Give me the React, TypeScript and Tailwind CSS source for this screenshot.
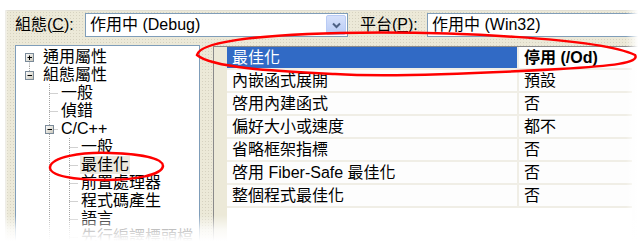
import React from "react";

const FONT = '"Liberation Sans", "Noto Sans CJK TC", sans-serif';

type Kind = "none" | "vline" | "tee" | "plusDown" | "minusUp" | "minusTee";

function Guide({ kind }: { kind: Kind }) {
  const dot = { stroke: "#a3a3a3", strokeWidth: 1, strokeDasharray: "1 1" } as const;
  const cx = 10.5;
  const cy = 9.5;
  const box = (minus: boolean) => (
    <g>
      <defs>
        <linearGradient id="bx" x1="0" y1="0" x2="1" y2="1">
          <stop offset="0" stopColor="#ffffff" />
          <stop offset="1" stopColor="#c8c5b8" />
        </linearGradient>
      </defs>
      <rect x={cx - 4} y={cy - 4} width={8} height={8} fill="url(#bx)" stroke="#7a8a99" strokeWidth={1} />
      <line x1={cx - 2} y1={cy} x2={cx + 2.5} y2={cy} stroke="#000" strokeWidth={1} />
      {!minus && <line x1={cx} y1={cy - 2} x2={cx} y2={cy + 2.5} stroke="#000" strokeWidth={1} />}
    </g>
  );
  return (
    <svg width={20} height={18} className="shrink-0 block">
      {(kind === "vline" || kind === "tee" || kind === "minusTee") && (
        <line x1={cx} y1={0} x2={cx} y2={18} {...dot} />
      )}
      {kind === "tee" && <line x1={cx} y1={cy} x2={19} y2={cy} {...dot} />}
      {kind === "plusDown" && <line x1={cx} y1={cy + 4} x2={cx} y2={18} {...dot} />}
      {kind === "minusUp" && <line x1={cx} y1={0} x2={cx} y2={cy - 4} {...dot} />}
      {kind === "minusTee" && <line x1={cx} y1={cy} x2={19} y2={cy} {...dot} />}
      {kind === "plusDown" && box(false)}
      {(kind === "minusUp" || kind === "minusTee") && box(true)}
    </svg>
  );
}

type TreeRow = { guides: Kind[]; text: string; sel?: boolean; ml: string };

const treeRows: TreeRow[] = [
  { guides: ["plusDown"], text: "通用屬性", ml: "ml-[3px]" },
  { guides: ["minusUp"], text: "組態屬性", ml: "ml-[3px]" },
  { guides: ["none", "tee"], text: "一般", ml: "ml-[1px]" },
  { guides: ["none", "tee"], text: "偵錯", ml: "ml-[1px]" },
  { guides: ["none", "minusTee"], text: "C/C++", ml: "ml-[1px]" },
  { guides: ["none", "vline", "tee"], text: "一般", ml: "ml-[1px]" },
  { guides: ["none", "vline", "tee"], text: "最佳化", sel: true, ml: "ml-[1px]" },
  { guides: ["none", "vline", "tee"], text: "前置處理器", ml: "ml-[1px]" },
  { guides: ["none", "vline", "tee"], text: "程式碼產生", ml: "ml-[1px]" },
  { guides: ["none", "vline", "tee"], text: "語言", ml: "ml-[1px]" },
  { guides: ["none", "vline", "tee"], text: "先行編譯標頭檔", ml: "ml-[1px]" },
];

const props: { name: string; value: string }[] = [
  { name: "最佳化", value: "停用 (/Od)" },
  { name: "內嵌函式展開", value: "預設" },
  { name: "啓用內建函式", value: "否" },
  { name: "偏好大小或速度", value: "都不" },
  { name: "省略框架指標", value: "否" },
  { name: "啓用 Fiber-Safe 最佳化", value: "否" },
  { name: "整個程式最佳化", value: "否" },
];

function Chevron() {
  return (
    <svg width={9} height={7} viewBox="0 0 9 7">
      <path d="M1 1.5 L4.5 5 L8 1.5" fill="none" stroke="#4d6185" strokeWidth={2} />
    </svg>
  );
}

export default function App() {
  return (
    <div
      className="relative w-[642px] h-[241px] overflow-hidden bg-white text-black"
      style={{ fontFamily: FONT }}
    >
      <div className="ml-[5px] mt-[10px] h-[231px] w-[637px] bg-[#ECE9D8] bg-[radial-gradient(#d6d2c0_0.6px,transparent_0.7px)] bg-[length:3px_3px] border-l border-t border-[#dcdad0] flex flex-col">
        {/* top row */}
        <div className="flex items-center h-[24px] mt-[2px] pl-[9px]">
          <div className="w-[70px] text-[16px] leading-none">
            組態(<span className="underline">C</span>):
          </div>
          <div className="w-[263px] h-[24px] bg-white border border-[#7F9DB9] flex items-center">
            <span className="flex-1 pl-[4px] text-[16px] leading-none">作用中 (Debug)</span>
            <div className="w-[20px] h-[20px] mr-[1px] rounded-[2px] border border-[#b9cbf5] bg-[linear-gradient(#d6e1fb,#b8cbf5)] flex items-center justify-center">
              <Chevron />
            </div>
          </div>
          <div className="w-[79px] pl-[12px] text-[16px] leading-none whitespace-nowrap">
            平台(<span className="underline">P</span>):
          </div>
          <div className="flex-1 h-[24px] bg-white border border-[#7F9DB9] border-r-0 flex items-center">
            <span className="pl-[4px] text-[16px] leading-none">作用中 (Win32)</span>
          </div>
        </div>

        {/* body */}
        <div className="flex mt-[8px] pl-[9px] flex-1">
          {/* tree */}
          <div className="w-[185px] bg-white border border-[#7F9DB9] border-b-0 pt-[2px] pl-[3px]">
            {treeRows.map((r, i) => (
              <div key={i} className="flex items-center h-[18px]">
                {r.guides.map((g, j) => (
                  <Guide key={j} kind={g} />
                ))}
                <span
                  className={`${r.ml} text-[16px] leading-[18px] px-[1px] whitespace-nowrap ${
                    r.sel ? "bg-[#ECE9DF]" : ""
                  }`}
                >
                  {r.text}
                </span>
              </div>
            ))}
          </div>

          {/* property grid */}
          <div className="ml-[13px] mt-[1px] flex-1 flex border-l border-t border-[#8a8a8a] bg-white">
            <div className="w-[13px] bg-[#ECE9D8]" />
            <div className="w-[405px] flex flex-col">
              {props.map((p, i) => (
                <div key={i} className="flex h-[23px] border-b-2 border-[#F0EEE6]">
                  <div
                    className={`w-[290px] pl-[5px] flex items-center text-[16px] leading-none whitespace-nowrap ${
                      i === 0 ? "bg-[#316AC5] text-white" : "bg-[#FDFDFD]"
                    }`}
                  >
                    {p.name}
                  </div>
                  <div
                    className={`flex-1 pl-[5px] flex items-center border-l-2 border-[#F0EEE6] text-[16px] leading-none bg-[#FDFDFD] whitespace-nowrap ${
                      i === 0 ? "font-bold" : ""
                    }`}
                  >
                    {p.value}
                  </div>
                </div>
              ))}
            </div>
            <div className="flex-1 bg-[#FDFDFD]" />
          </div>
        </div>
      </div>

      {/* edge fades */}
      <div className="pointer-events-none absolute left-0 right-0 bottom-0 h-[26px] bg-[linear-gradient(to_bottom,rgba(255,255,255,0),rgba(255,255,255,0.75)_55%,#ffffff)]" />
      <div className="pointer-events-none absolute top-0 bottom-0 right-0 w-[16px] bg-[linear-gradient(to_right,rgba(255,255,255,0),#ffffff_75%)]" />
      <div className="pointer-events-none absolute top-0 left-0 right-0 h-[11px] bg-[linear-gradient(to_bottom,#ffffff_60%,rgba(255,255,255,0))]" />
      <div className="pointer-events-none absolute top-0 bottom-0 left-0 w-[8px] bg-[linear-gradient(to_right,#ffffff_40%,rgba(255,255,255,0))]" />

      {/* red annotation ellipses */}
      <svg className="pointer-events-none absolute left-0 top-0" width={642} height={241}>
        <path
          d="M197,55 C200,42 255,35 340,33 C450,31 600,38 635,55 C640,63 612,66 560,69 C470,74 385,77 335,74 C275,71 212,68 197,55 Z"
          fill="none"
          stroke="#ff0000"
          strokeWidth={2.5}
        />
        <path
          d="M50,167 C52,157 80,152 110,153 C140,154 163,158 163,166 C162,175 135,180 105,180 C75,180 49,176 50,167 Z"
          fill="none"
          stroke="#ff0000"
          strokeWidth={2.5}
        />
      </svg>
    </div>
  );
}
